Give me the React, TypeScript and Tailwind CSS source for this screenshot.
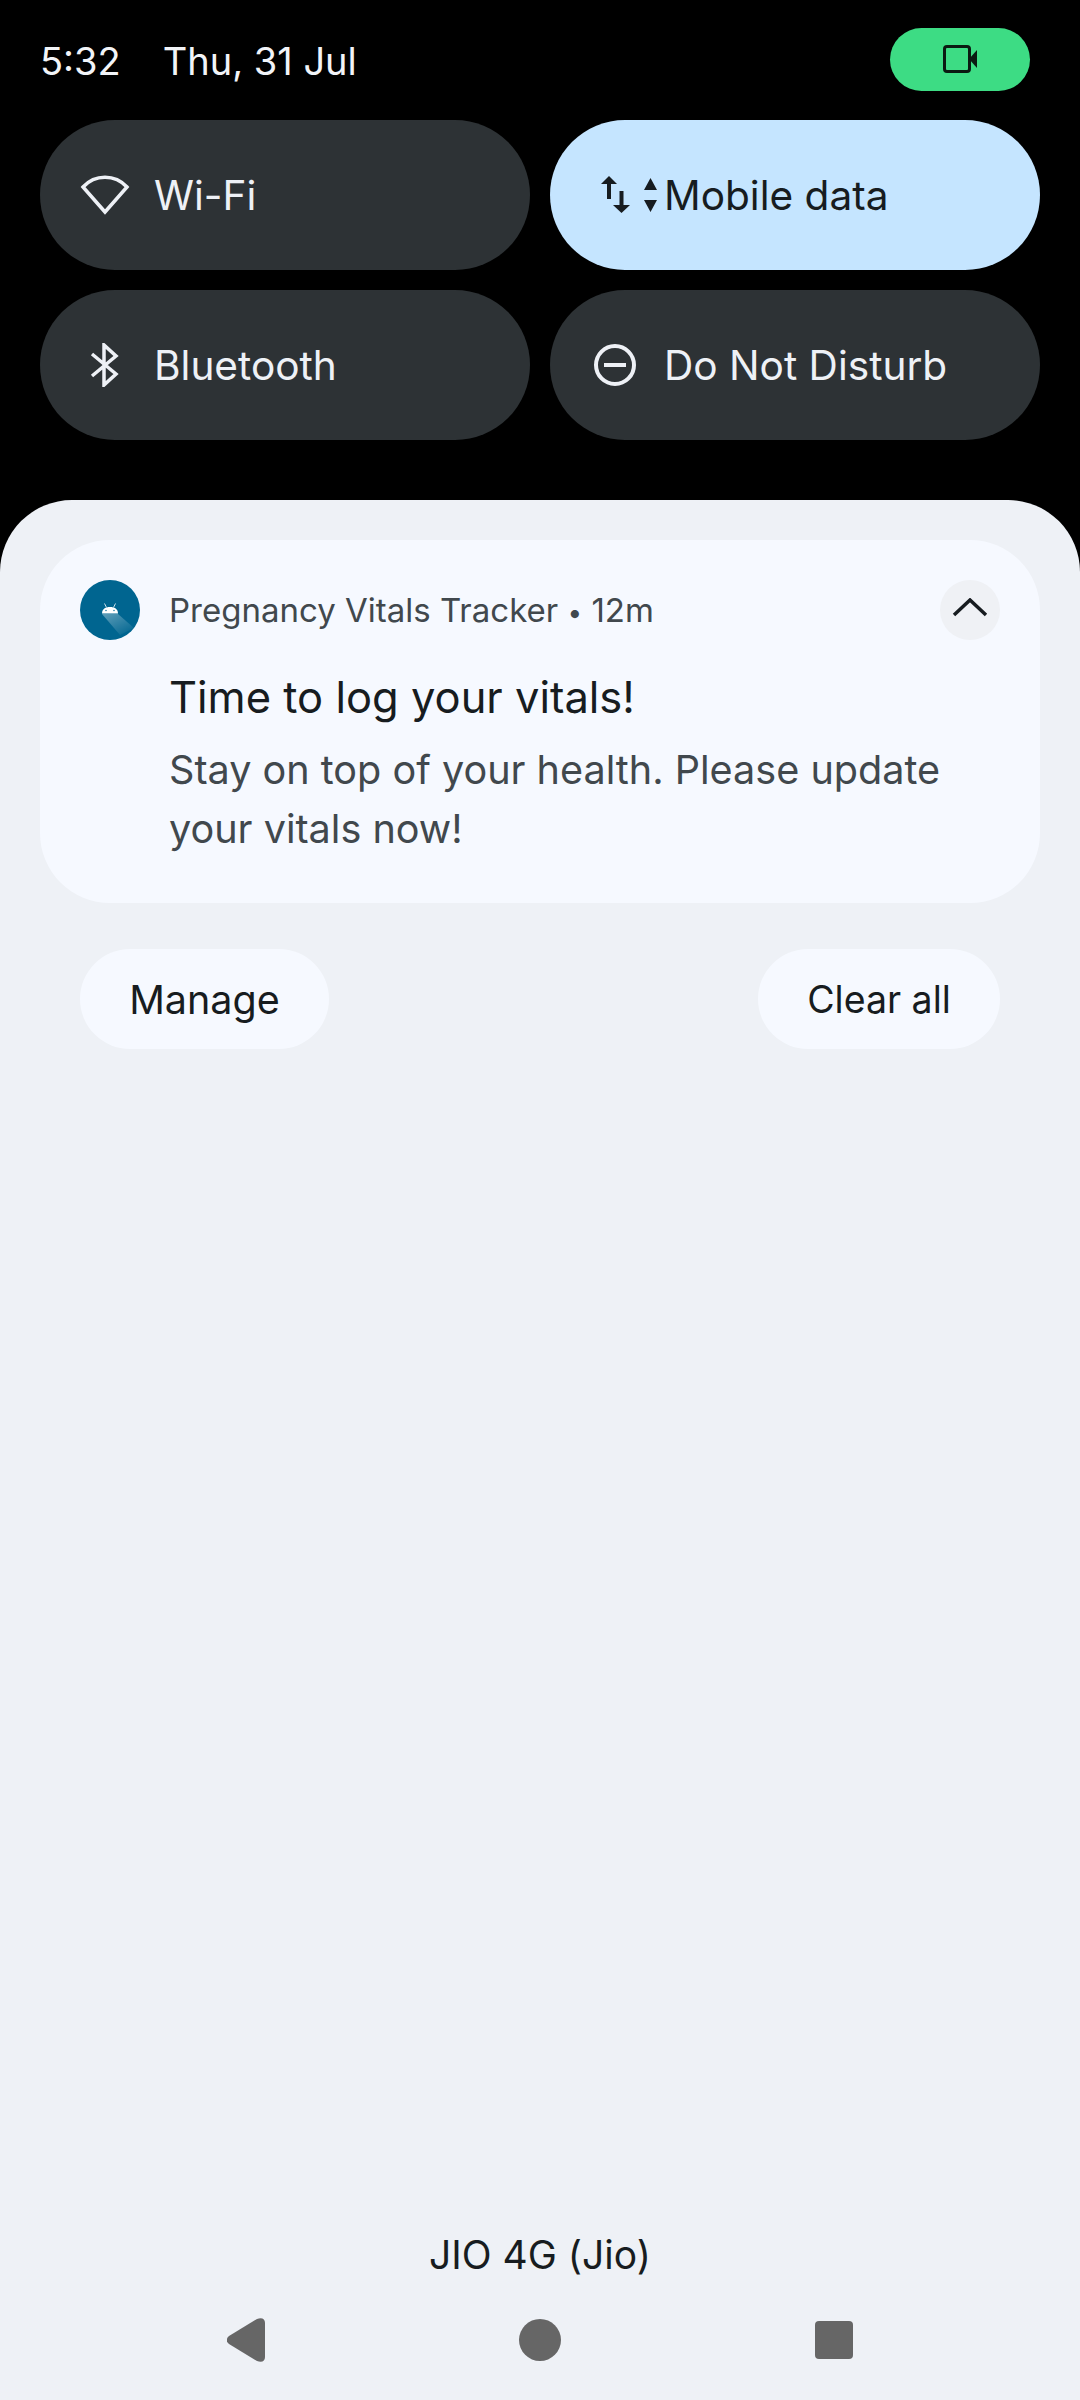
const FONT = 'font-["Inter",sans-serif]';

function Tile({ icon, label, active }: { icon: React.ReactNode; label: string; active?: boolean }) {
  return (
    <div
      className={
        'flex h-[150px] items-center rounded-[75px] pl-[40px] text-[40.6px] leading-none ' +
        (active ? 'bg-[#c5e5ff] text-[#171c20]' : 'bg-[#2d3235] text-[#eef1f6]')
      }
    >
      <div className="flex w-[74px] shrink-0 items-center justify-start">{icon}</div>
      <span className="pt-[2px]">{label}</span>
    </div>
  );
}

function WifiIcon() {
  return (
    <svg width="50" height="44" viewBox="0 0 50 44" fill="none" stroke="currentColor" strokeWidth="3.5">
      <path d="M25 39 3 14C15 1 35 1 47 14Z" strokeLinejoin="miter" />
    </svg>
  );
}

function BluetoothIcon() {
  return (
    <svg width="50" height="44" viewBox="0 0 50 44" fill="none" stroke="currentColor" strokeWidth="3.5">
      <path d="M12 11 36 31 24 42V2L36 13 12 33" />
    </svg>
  );
}

function DndIcon() {
  return (
    <svg className="ml-[3px]" width="44" height="44" viewBox="0 0 44 44" fill="none" stroke="currentColor" strokeWidth="4">
      <circle cx="22" cy="22" r="19" />
      <path d="M11 22H33" />
    </svg>
  );
}

function DataIcon() {
  return (
    <svg className="ml-[10px]" width="60" height="40" viewBox="0 0 60 40" fill="#171c20">
      <path d="M9 1 17 9H11V24H7V9H1Z" />
      <path d="M19.5 16H23.5V30H30L21.5 38 13 30H19.5Z" />
      <path d="M50.5 3 57 15H44ZM44 25H57L50.5 37Z" />
    </svg>
  );
}

function AppIcon() {
  return (
    <div className="h-[60px] w-[60px] shrink-0 overflow-hidden rounded-full bg-[#006590]">
      <svg width="60" height="60" viewBox="0 0 60 60">
        <defs>
          <linearGradient id="shade" x1="0.1" y1="0" x2="0.9" y2="1">
            <stop offset="0" stopColor="#ffffff" stopOpacity="0.35" />
            <stop offset="1" stopColor="#ffffff" stopOpacity="0" />
          </linearGradient>
        </defs>
        <path d="M22 34H38L54 48 40 55Z" fill="url(#shade)" />
        <path d="M22 33.5C22 29 25.5 27 30 27 34.5 27 38 29 38 33.5Z" fill="#ffffff" />
        <path d="M24.5 23.5 26.5 27.5M35.5 23.5 33.5 27.5" stroke="#ffffff" strokeWidth="0.8" />
        <circle cx="26" cy="30.5" r="0.7" fill="#006590" />
        <circle cx="34" cy="30.5" r="0.7" fill="#006590" />
      </svg>
    </div>
  );
}

export default function App() {
  return (
    <div className={'flex h-[2400px] w-[1080px] flex-col overflow-hidden bg-black ' + FONT}>
      <header className="flex h-[120px] shrink-0 items-start pl-[40px] pr-[50px] pt-[28px] text-[38px] leading-[67px] text-[#f2f4f8]">
        <span>5:32</span>
        <span className="ml-[42px]">Thu, 31 Jul</span>
        <div className="ml-auto flex h-[63px] w-[140px] items-center justify-center rounded-full bg-[#3ddc84]">
          <svg className="mb-[2px]" width="36" height="28" viewBox="0 0 36 28" fill="none">
            <rect x="2.5" y="1.5" width="25" height="25" rx="2.5" stroke="#0b1a12" strokeWidth="3" />
            <path d="M27 14 35 5V23Z" fill="#0b1a12" />
          </svg>
        </div>
      </header>

      <div className="grid shrink-0 grid-cols-2 gap-x-[20px] gap-y-[20px] px-[40px]">
        <Tile icon={<WifiIcon />} label="Wi-Fi" />
        <Tile icon={<DataIcon />} label="Mobile data" active />
        <Tile icon={<BluetoothIcon />} label="Bluetooth" />
        <Tile icon={<DndIcon />} label="Do Not Disturb" />
      </div>

      <main className="mt-[60px] flex flex-1 flex-col rounded-t-[72px] bg-[#eef1f6] px-[40px] pt-[40px]">
        <section className="h-[363px] rounded-[70px] bg-[#f6f9ff] pl-[40px] pr-[40px] pt-[40px]">
          <div className="flex h-[60px] items-center">
            <AppIcon />
            <span className="ml-[29px] pt-[2px] text-[33px] text-[#41484d]">
              Pregnancy Vitals Tracker <span className="text-[26px]">•</span> 12m
            </span>
            <div className="ml-auto flex h-[60px] w-[60px] items-center justify-center rounded-full bg-[#eff1f5]">
              <svg width="36" height="24" viewBox="0 0 36 24" fill="none" stroke="#171c20" strokeWidth="3.5">
                <path d="M2 17 18 2 34 17" />
              </svg>
            </div>
          </div>
          <div className="ml-[89px] mt-[27px] text-[43.5px] leading-[60px] text-[#171c20]">Time to log your vitals!</div>
          <div className="ml-[89px] mt-[14px] text-[39.6px] leading-[59px] text-[#41484d]">
            Stay on top of your health. Please update your vitals now!
          </div>
        </section>

        <div className="mt-[46px] flex justify-between px-[40px] text-[#171c20]">
          <div className="flex h-[100px] w-[249px] items-center justify-center rounded-[50px] bg-[#f6f9ff] pt-[3px] text-[39.5px]">Manage</div>
          <div className="flex h-[100px] w-[242px] items-center justify-center rounded-[50px] bg-[#f6f9ff] pt-[3px] text-[37.5px]">Clear all</div>
        </div>

        <div className="mt-auto flex flex-col items-center">
          <div className="text-[39px] leading-[60px] text-[#171c20]">JIO 4G (Jio)</div>
          <nav className="mb-[38px] mt-[33px] flex h-[44px] items-center">
            <svg width="40" height="44" viewBox="0 0 40 44" fill="#666666">
              <path d="M2 18 30 1C35-1 38 1 38 5V39C38 43 35 45 30 43L2 26C-1 24-1 20 2 18Z" />
            </svg>
            <div className="ml-[252px] h-[42px] w-[42px] rounded-full bg-[#666666]" />
            <div className="ml-[254px] h-[38px] w-[38px] rounded-[4px] bg-[#666666]" />
          </nav>
        </div>
      </main>
    </div>
  );
}
